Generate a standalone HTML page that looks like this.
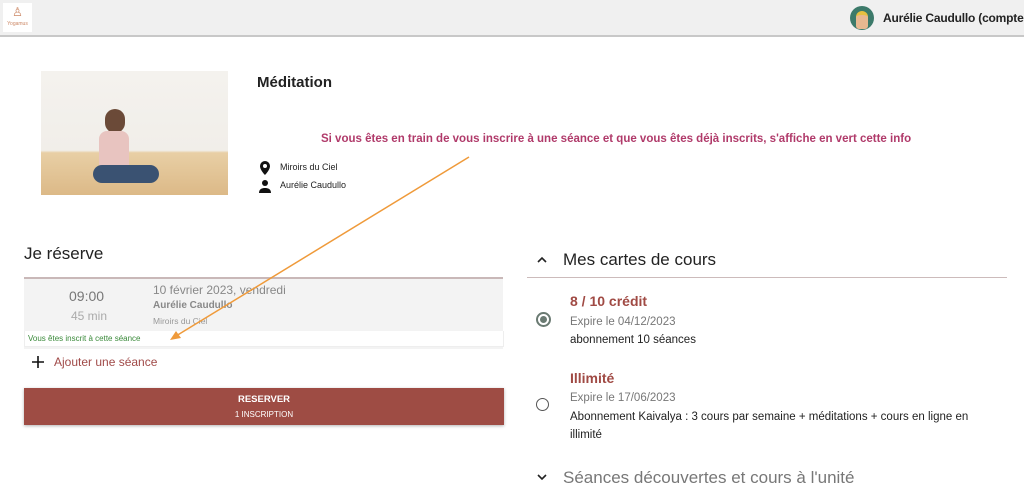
<!DOCTYPE html><html><head><meta charset="utf-8"><style>
body{margin:0;width:1024px;height:494px;overflow:hidden;background:#fff;font-family:"Liberation Sans",Arial,sans-serif;position:relative}
.a{position:absolute}
</style></head><body>
<div class="a" style="left:0;top:0;width:1024px;height:35px;background:#f0f0f0;border-bottom:2px solid #c8c8c8"></div>
<div class="a" style="left:3px;top:3px;width:29px;height:29px;background:#fff;font-size:5px;color:#c86;text-align:center"><div style="font-size:12px;line-height:18px;color:#c86">♙</div>Yogamus</div>
<div class="a" style="left:850px;top:6px;width:24px;height:24px;border-radius:50%;background:#3c7a6a"><div style="margin:5px 6px;width:12px;height:14px;border-radius:6px 6px 3px 3px;background:#e8b890;border-top:4px solid #e6c040"></div></div>
<div class="a" style="left:883px;top:11px;font-size:12px;color:#222;white-space:nowrap;font-weight:bold;letter-spacing:-0.2px">Aurélie Caudullo (compte client)</div>
<div class="a" style="left:41px;top:71px;width:187px;height:124px;background:linear-gradient(#f4f2ee 0,#f1eee9 64%,#e8cfa5 66%,#dcb987 100%)">
<div class="a" style="left:64px;top:38px;width:20px;height:24px;border-radius:10px;background:#6b4a38"></div>
<div class="a" style="left:58px;top:60px;width:30px;height:36px;background:#e8c4c0;border-radius:8px 8px 2px 2px"></div>
<div class="a" style="left:52px;top:94px;width:66px;height:18px;background:#3a5272;border-radius:10px"></div>
</div>
<div class="a" style="left:257px;top:74px;font-size:15px;color:#222;font-weight:bold">Méditation</div>
<div class="a" style="left:321px;top:133px;font-size:11.5px;font-weight:bold;color:#b03a6a">Si vous êtes en train de vous inscrire à une séance et que vous êtes déjà inscrits, s'affiche en vert cette info</div>
<svg class="a" style="left:258px;top:160px" width="14" height="34"><path d="M7 1a5 5 0 0 0-5 5c0 4 5 9 5 9s5-5 5-9a5 5 0 0 0-5-5zm0 7a2 2 0 1 1 0-4 2 2 0 0 1 0 4z" fill="#111"/><circle cx="7" cy="23" r="3" fill="#111"/><path d="M1 33c0-4 3-5 6-5s6 1 6 5z" fill="#111"/></svg>
<div class="a" style="left:280px;top:162px;font-size:9px;color:#222">Miroirs du Ciel</div>
<div class="a" style="left:280px;top:180px;font-size:9px;color:#222">Aurélie Caudullo</div>
<div class="a" style="left:24px;top:244px;font-size:17px;color:#222">Je réserve</div>
<div class="a" style="left:24px;top:277px;width:479px;height:70px;background:#f3f3f3;border-top:2px solid #c9b8b8"></div>
<div class="a" style="left:24px;top:331px;width:478px;height:15px;background:#fff;border:1px solid #eee;border-top:0"></div>
<div class="a" style="left:69px;top:288px;font-size:14px;color:#777">09:00</div>
<div class="a" style="left:71px;top:309px;font-size:12px;color:#aaa">45 min</div>
<div class="a" style="left:153px;top:283px;font-size:12px;color:#888">10 février 2023, vendredi</div>
<div class="a" style="left:153px;top:300px;font-size:10px;font-weight:bold;color:#888">Aurélie Caudullo</div>
<div class="a" style="left:153px;top:316px;font-size:8.5px;color:#999">Miroirs du Ciel</div>
<div class="a" style="left:28px;top:334px;font-size:8px;color:#3a8a3a">Vous êtes inscrit à cette séance</div>
<svg class="a" style="left:32px;top:356px" width="12" height="12"><path d="M6 0v12M0 6h12" stroke="#111" stroke-width="1.6"/></svg>
<div class="a" style="left:54px;top:355px;font-size:12px;color:#a04a48">Ajouter une séance</div>
<div class="a" style="left:24px;top:388px;width:480px;height:37px;background:#9e4c44;box-shadow:0 1px 3px rgba(0,0,0,.3);color:#fff;text-align:center">
<div style="font-size:9.5px;font-weight:bold;margin-top:6px">RESERVER</div><div style="font-size:8px;margin-top:5px">1 INSCRIPTION</div></div>
<svg class="a" style="left:0;top:0" width="1024" height="494"><line x1="469" y1="157" x2="176" y2="336" stroke="#ef9a3a" stroke-width="1.5"/><path d="M170 340l11-2-5-7z" fill="#ef9a3a"/>
<path d="M538 262l4-4 4 4" stroke="#222" stroke-width="1.6" fill="none"/>
<path d="M538 475l4 4 4-4" stroke="#222" stroke-width="1.6" fill="none"/></svg>
<div class="a" style="left:563px;top:250px;font-size:17px;color:#222">Mes cartes de cours</div>
<div class="a" style="left:527px;top:277px;width:480px;height:1px;background:#cbb"></div>
<div class="a" style="left:570px;top:293px;font-size:14px;font-weight:bold;color:#a04a44">8 / 10 crédit</div>
<div class="a" style="left:536px;top:312px;width:11px;height:11px;border:2px solid #6a7a72;border-radius:50%"><div style="margin:2px;width:7px;height:7px;border-radius:50%;background:#6a7a72"></div></div>
<div class="a" style="left:570px;top:316px;font-size:11.5px;color:#777">Expire le 04/12/2023</div>
<div class="a" style="left:570px;top:334px;font-size:11.5px;color:#222">abonnement 10 séances</div>
<div class="a" style="left:570px;top:370px;font-size:14px;font-weight:bold;color:#a04a44">Illimité</div>
<div class="a" style="left:536px;top:398px;width:11px;height:11px;border:1.5px solid #555;border-radius:50%"></div>
<div class="a" style="left:570px;top:392px;font-size:11.5px;color:#777">Expire le 17/06/2023</div>
<div class="a" style="left:570px;top:408px;font-size:11.5px;color:#222;line-height:18px;width:425px">Abonnement Kaivalya : 3 cours par semaine + méditations + cours en ligne en illimité</div>
<div class="a" style="left:563px;top:468px;font-size:17px;color:#777">Séances découvertes et cours à l'unité</div>
</body></html>
